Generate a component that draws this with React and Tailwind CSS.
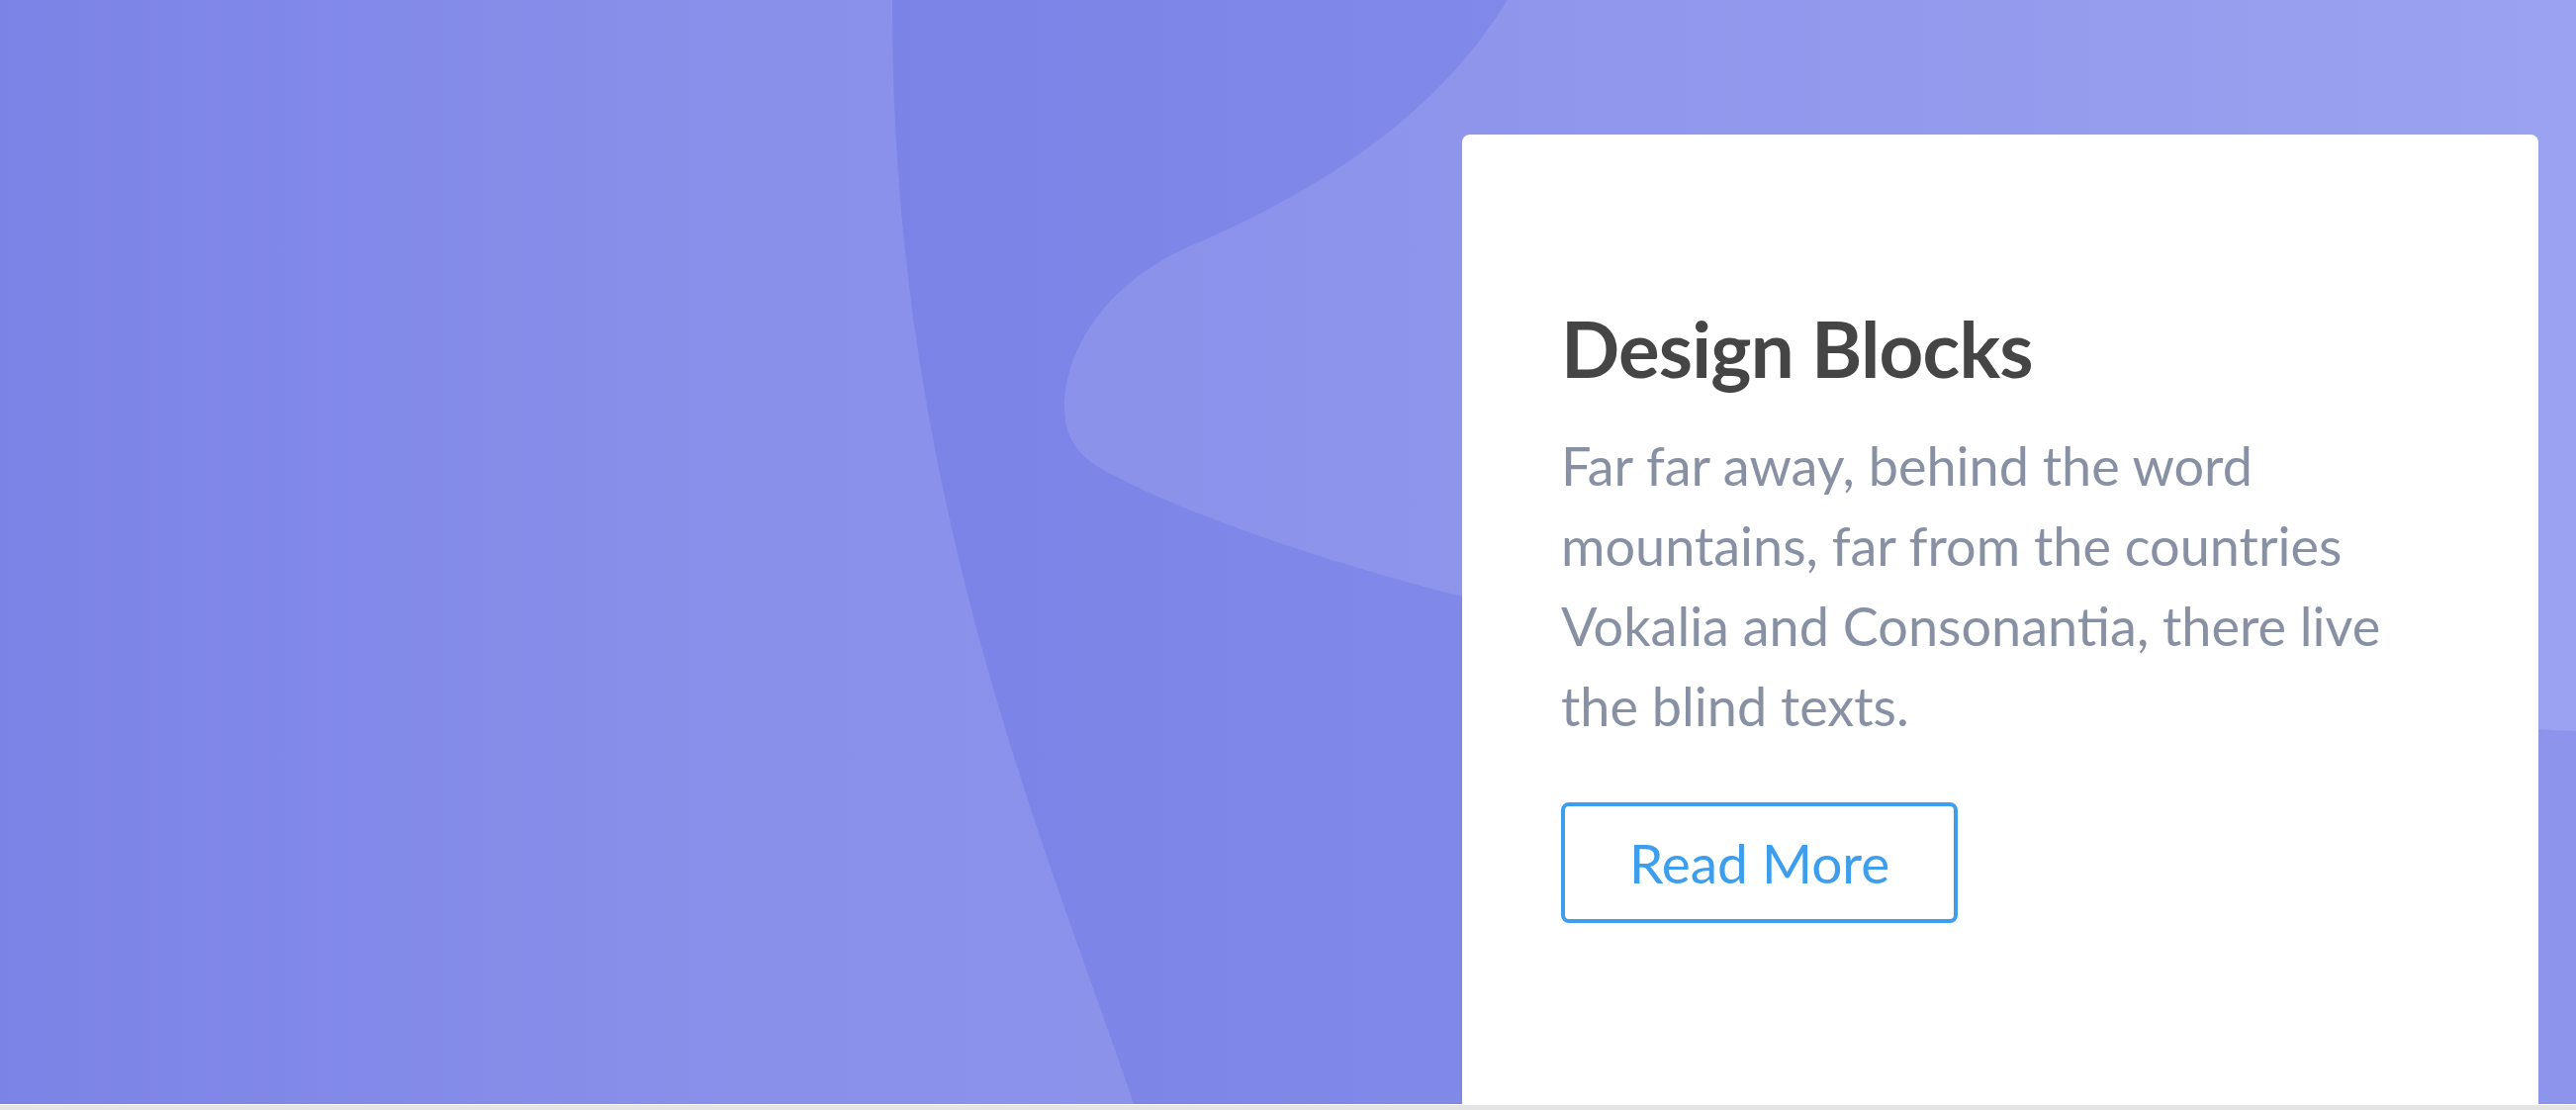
function WaveBackground() {
  return (
    <svg
      className="absolute inset-0 h-full w-full"
      viewBox="0 0 2604 1116"
      preserveAspectRatio="none"
      aria-hidden="true"
    >
      <defs>
        <linearGradient id="base" x1="0" y1="0" x2="1" y2="0">
          <stop offset="0" stopColor="#7b83e6" />
          <stop offset="0.28" stopColor="#8990ea" />
          <stop offset="0.5" stopColor="#8c93eb" />
          <stop offset="1" stopColor="#9ba2f0" />
        </linearGradient>
        <linearGradient id="blob" x1="0" y1="0" x2="1" y2="0">
          <stop offset="0" stopColor="#7b83e7" />
          <stop offset="0.3" stopColor="#8088e8" />
          <stop offset="1" stopColor="#8d94eb" />
        </linearGradient>
      </defs>
      <rect width="2604" height="1116" fill="url(#base)" />
      <path
        fill="url(#blob)"
        d="M902 0 L1524 0 C1450 120 1330 195 1200 250 C1110 292 1075 360 1076 415 C1077 448 1095 465 1125 480 C1205 522 1340 568 1478 603 C1800 680 2200 720 2604 739 L2604 1116 L1146 1116 C1060 860 900 500 902 0 Z"
      />
    </svg>
  );
}

export default function App() {
  return (
    <div className="w-[2604px] font-['Lato','Liberation_Sans',sans-serif]">
      <section className="relative h-[1116px] overflow-hidden">
        <WaveBackground />

        <div className="relative flex h-full justify-end pt-[136px] pr-[38px]">
          <div className="w-[1088px] rounded-t-[8px] bg-white pl-[100px] pr-[100px] pt-[170px]">
            <h2 className="text-[78px] font-bold leading-[1.2] tracking-[-0.8px] text-[#454545]">
              Design Blocks
            </h2>
            <p className="mt-[30px] max-w-[870px] text-[54px] leading-[81px] text-[#8891a4]">
              Far far away, behind the word mountains, far from the countries
              Vokalia and Consonantia, there live the blind texts.
            </p>
            <button className="mt-[57px] rounded-[8px] border-[4px] border-[#3d9eee] px-[65px] py-[24px] text-[55px] leading-[1.2] text-[#3d9eee]">
              Read More
            </button>
          </div>
        </div>
      </section>
      <div className="h-[6px] border-t border-white bg-[#e4e4e4]" />
    </div>
  );
}
